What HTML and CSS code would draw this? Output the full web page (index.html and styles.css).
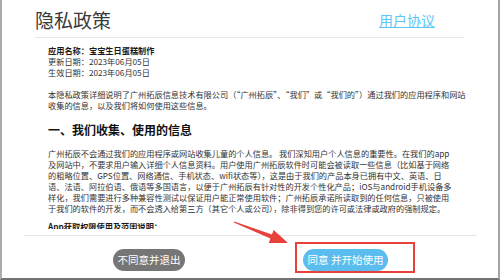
FILE: index.html
```html
<!DOCTYPE html>
<html lang="zh-CN">
<head>
    <meta charset="UTF-8">
    <meta name="viewport" content="width=device-width, initial-scale=1.0">
    <title>隐私政策</title>
    <link rel="stylesheet" href="styles.css">
</head>
<body>
    <div class="screen">
        <div class="header">
            <h1 class="title">隐私政策</h1>
            <a class="link" href="#">用户协议</a>
        </div>
        <div class="body">
            <div class="content">
                <p class="meta"><strong>应用名称：宝宝生日蛋糕制作</strong></p>
                <p class="meta">更新日期：2023年06月05日</p>
                <p class="meta">生效日期：2023年06月05日</p>
                <p class="para">本隐私政策详细说明了广州拓辰信息技术有限公司（“广州拓辰”、“我们”或“我们的”）通过我们的应用程序和网站<br>收集的信息，以及我们将如何使用这些信息。</p>
                <h2 class="section">一、我们收集、使用的信息</h2>
                <p class="para">广州拓辰不会通过我们的应用程序或网站收集儿童的个人信息。 我们深知用户个人信息的重要性。在我们的app<br>及网站中，不要求用户输入详细个人信息资料。用户使用广州拓辰软件时可能会被读取一些信息（比如基于网络<br>的粗略位置、GPS位置、网络通信、手机状态、wifi状态等），这是由于我们的产品本身已拥有中文、英语、日<br>语、法语、阿拉伯语、俄语等多国语言，以便于广州拓辰有针对性的开发个性化产品；iOS与android手机设备多<br>样化，我们需要进行多种兼容性测试以保证用户能正常使用软件；广州拓辰承诺所读取到的任何信息，只被使用<br>于我们的软件的开发，而不会透入给第三方（其它个人或公司），除非得到您的许可或法律或政府的强制规定。</p>
                <p class="para sub"><strong>App获取权限使用及范围说明：</strong></p>
            </div>
            <div class="track"><div class="thumb"></div></div>
        </div>
        <div class="footer">
            <button class="btn btn-grey">不同意并退出</button>
            <button class="btn btn-blue">同意 并开始使用</button>
        </div>

        <div class="mark-box"></div>
        <svg class="mark-arrow" width="62" height="30" viewBox="0 0 62 30">
            <polygon points="2.8,4.6 39.5,20.4 37.7,25 57,25 42.7,12 40.9,16.6 3.2,3.4" fill="#e8403a"/>
        </svg>
    </div>
</body>
</html>
```

FILE: styles.css
```css
body {
    margin: 0;
    font-family: "Noto Sans CJK SC", "Noto Sans", sans-serif;
    background-color: #ffffff;
}
.screen {
    position: relative;
    width: 500px;
    height: 280px;
    box-sizing: border-box;
    border-left: 2px solid #ababab;
    border-right: 2px solid #a5a5a5;
    border-bottom: 2px solid #737373;
    background-color: #ffffff;
    display: flex;
    flex-direction: column;
    overflow: hidden;
}
.header {
    display: flex;
    justify-content: space-between;
    align-items: flex-end;
    height: 37px;
    margin: 0 34px 0 33px;
    border-bottom: 1px solid #e6e6e6;
}
.title {
    margin: 0 0 7px 0;
    font-size: 19px;
    line-height: 20px;
    font-weight: normal;
    color: #3a3a3a;
}
.link {
    margin: 0 29px 9px 0;
    font-size: 14px;
    line-height: 16px;
    color: #5cc6f7;
    text-decoration: underline;
}
.body {
    display: flex;
    height: 191px;
    flex-shrink: 0;
    overflow: hidden;
}
.content {
    flex: 1;
    padding: 7px 0 0 46px;
    color: #333333;
    font-size: 8.2px;
    line-height: 11px;
}
.content p {
    margin: 0;
    white-space: nowrap;
}
.content strong {
    color: #1a1a1a;
    font-weight: bold;
}
.content .para {
    margin-top: 11px;
}
.content .sub {
    margin-top: 7px;
}
.section {
    margin: 9px 0 8px 0;
    font-size: 12px;
    line-height: 20px;
    font-weight: bold;
    color: #111111;
}
.section + .para {
    margin-top: 0;
}
.track {
    width: 3px;
    margin-right: 35px;
}
.thumb {
    margin-top: 5px;
    height: 17px;
    background-color: #8a8a8a;
    border-radius: 1px;
}
.footer {
    display: flex;
    justify-content: center;
    gap: 118px;
    margin: 6px 21px 0 22px;
    padding-top: 13px;
    border-top: 1px solid #e6e6e6;
}
.btn {
    height: 22px;
    padding: 0 4px;
    border: none;
    border-radius: 11px;
    font-family: "Noto Sans CJK SC", sans-serif;
    font-size: 10.5px;
    line-height: 22px;
    white-space: nowrap;
    color: #ffffff;
}
.btn-grey {
    min-width: 72px;
    background-color: #767676;
}
.btn-blue {
    min-width: 85px;
    background-color: #5bbdee;
}
.mark-box {
    position: absolute;
    left: 293px;
    top: 242px;
    width: 120px;
    height: 31px;
    box-sizing: border-box;
    border: 2px solid #e8403a;
}
.mark-arrow {
    position: absolute;
    left: 229px;
    top: 218px;
}
```
